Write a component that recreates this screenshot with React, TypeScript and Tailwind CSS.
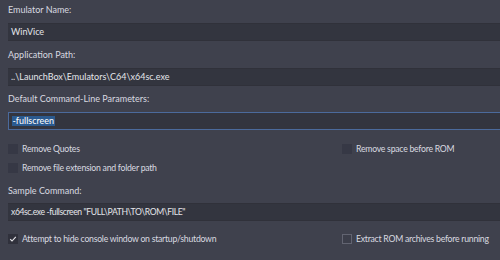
import React from "react";

const font = { fontFamily: 'Lato, "Noto Sans", sans-serif' };

function Label({ text, className = "" }: { text: string; className?: string }) {
  return (
    <div className={`h-5 flex items-center text-[9px] text-[#d9dae0] whitespace-nowrap ${className}`}>{text}</div>
  );
}

function Input({ children, focused = false, className = "" }: { children: React.ReactNode; focused?: boolean; className?: string }) {
  return (
    <div
      className={`h-[18px] flex items-center pl-[3px] text-[#e4e5ea] whitespace-nowrap ${
        focused ? "bg-[#33353f] border border-r-0 border-[#4b6a9c]" : "bg-[#33353f] border-y border-[#30313a]"
      } ${className}`}
    >
      {children}
    </div>
  );
}

function Check({ label, checked = false, outlined = false }: { label: string; checked?: boolean; outlined?: boolean }) {
  return (
    <div className="h-[19px] flex items-center whitespace-nowrap">
      <div
        className={`w-[10px] h-[10px] shrink-0 flex items-center justify-center ${
          outlined ? "border border-[#626471] bg-[#3c3e4a]" : checked ? "bg-[#30313c]" : "bg-[#363845]"
        }`}
      >
        {checked && (
          <svg width="8" height="8" viewBox="0 0 8 8">
            <path d="M1.2 4.2 L3 6 L6.8 1.8" stroke="#e8e8ec" strokeWidth="1.1" fill="none" />
          </svg>
        )}
      </div>
      <span className="ml-[4px] text-[8.7px] tracking-[-0.25px] text-[#d9dae0]">{label}</span>
    </div>
  );
}

export default function App() {
  return (
    <div className="w-[500px] h-[260px] bg-[#3f414d] pl-2 overflow-hidden" style={font}>
      <Label text="Emulator Name:" />
      <Input className="mt-[3px] text-[9px]">WinVice</Input>
      <Label text="Application Path:" className="mt-[4px]" />
      <Input className="mt-[3px] text-[9px]">..\LaunchBox\Emulators\C64\x64sc.exe</Input>
      <Label text="Default Command-Line Parameters:" className="mt-[3px]" />
      <Input className="mt-[3px] text-[9px]" focused>
        <span className="bg-[#2b5a8f] text-white leading-[10px] pl-[0.5px] pr-[1px]">-fullscreen</span>
      </Input>
      <div className="grid grid-cols-[334px_1fr] mt-[9px]">
        <Check label="Remove Quotes" />
        <Check label="Remove space before ROM" />
        <Check label="Remove file extension and folder path" />
        <div />
      </div>
      <Label text="Sample Command:" className="mt-[4px] text-[8.7px]" />
      <Input className="mt-[2px] text-[8.6px] tracking-[-0.4px] pl-[0px]">x64sc.exe -fullscreen "FULL\PATH\TO\ROM\FILE"</Input>
      <div className="grid grid-cols-[334px_1fr] mt-[8px]">
        <Check label="Attempt to hide console window on startup/shutdown" checked />
        <Check label="Extract ROM archives before running" outlined />
      </div>
    </div>
  );
}
